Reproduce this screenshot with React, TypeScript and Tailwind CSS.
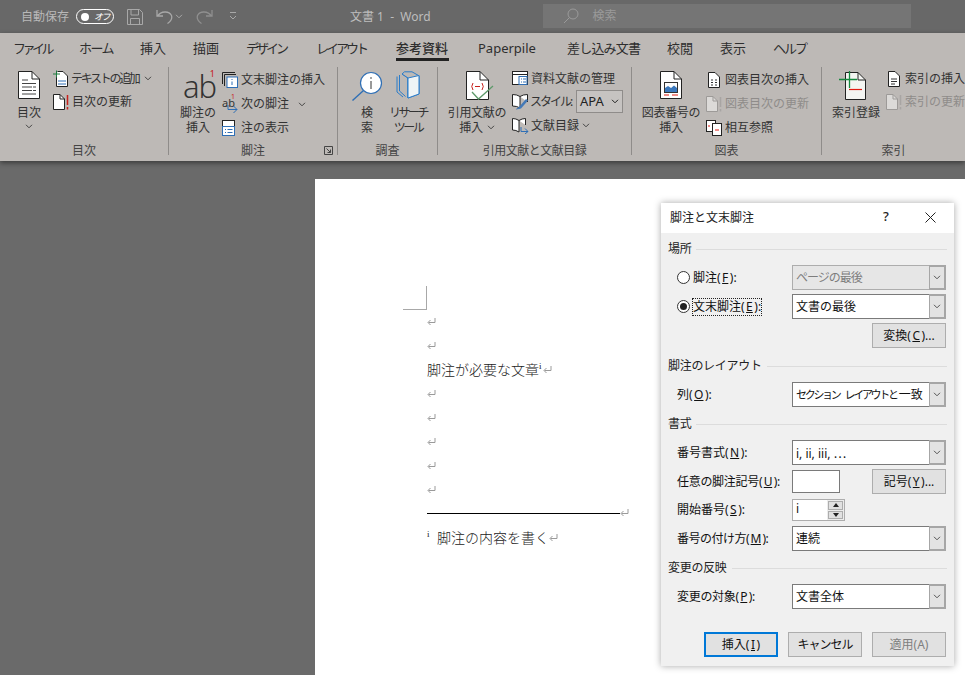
import type { ReactNode } from "react"

const tabs = [
  { label: "ファイル", ml: "ml-[13px]", cls: "tracking-[-3.500px]", w: "w-[38px]" },
  { label: "ホーム", ml: "ml-[28px]", cls: "tracking-[-1.500px]", w: "w-[34px]" },
  { label: "挿入", ml: "ml-[27px]", cls: "", w: "w-[26px]" },
  { label: "描画", ml: "ml-[27px]", cls: "", w: "w-[26px]" },
  { label: "デザイン", ml: "ml-[27px]", cls: "tracking-[-3px]", w: "w-[42px]" },
  { label: "レイアウト", ml: "ml-[28px]", cls: "tracking-[-3px]", w: "w-[50px]" },
  { label: "参考資料", ml: "ml-[30px]", cls: "font-medium border-b-[3px] border-[#222]", w: "w-[53px]" },
  { label: "Paperpile", ml: "ml-[29px]", cls: "", w: "w-[59px]" },
  { label: "差し込み文書", ml: "ml-[30px]", cls: "tracking-[-0.800px]", w: "w-[73px]" },
  { label: "校閲", ml: "ml-[27px]", cls: "", w: "w-[26px]" },
  { label: "表示", ml: "ml-[27px]", cls: "", w: "w-[26px]" },
  { label: "ヘルプ", ml: "ml-[27px]", cls: "tracking-[-2px]", w: "w-[32px]" },
]

function Chevron({ className = "" }: { className?: string }) {
  return (
    <svg viewBox="0 0 8 5" className={"w-2 h-[5px] " + className} fill="none" stroke="currentColor" strokeWidth="1">
      <path d="M1 .8l3 3 3-3" />
    </svg>
  )
}

function TocBigIcon() {
  return (
    <svg width="22" height="28" viewBox="0 0 22 28" fill="none">
      <path d="M.5 .5H14L21.500 8V27.500H.5Z" fill="#fff" stroke="#222" />
      <path d="M14 .5V8H21.500" stroke="#222" />
      <path d="M4 9h6M4 12.500h14M4 16h10M15 16h3M4 19.500h10M15 19.500h3M4 23h14" stroke="#444" />
    </svg>
  )
}

function AbIcon() {
  return (
    <div className="relative w-[30px] h-[30px] text-[#333] font-light text-[31px] leading-[30px] tracking-[-1px]">
      ab
      <span className="absolute right-[-1px] top-[-3px] text-[9px] leading-[12px] font-normal text-[#c8201c]">1</span>
    </div>
  )
}

function SearchIcon() {
  return (
    <svg width="32" height="30" viewBox="0 0 32 30" fill="none">
      <circle cx="20" cy="12" r="10.500" fill="#fff" stroke="#2f6fb5" strokeWidth="1.200" />
      <path d="M12.500 19.500L1.500 29.500" stroke="#2f6fb5" strokeWidth="1.400" />
      <path d="M20 10v8" stroke="#333" />
      <circle cx="20" cy="7" r=".8" fill="#333" />
    </svg>
  )
}

function BooksIcon() {
  return (
    <svg width="24" height="30" viewBox="0 0 24 30" fill="none" stroke="#2b7cc9">
      <path d="M1 5.500V21l6 5M3.500 4v16l6 5.500M6 3l6 4v20" />
      <path d="M8.500 .8L16 .8l7 4V23l-11 4V7L6 3Z" fill="#bdb9b6" />
      <path d="M12 7l11-2.500V23l-11 4Z" fill="#eef4f6" />
    </svg>
  )
}

function CiteIcon() {
  return (
    <svg className="ml-[6px]" width="28" height="30" viewBox="0 0 28 30" fill="none">
      <path d="M.5 .5H14L22.500 9V28.500H.5Z" fill="#fff" stroke="#222" />
      <path d="M14 .5V9H22.500" stroke="#222" />
      <path d="M7 12q-2.500 3.500 0 7M16 12q2.500 3.500 0 7M9 15.500h5" stroke="#c8201c" />
      <path d="M6 21l6.500 7L27 15" stroke="#5d9a6a" strokeWidth="1.300" fill="none" />
    </svg>
  )
}

function PictureIcon() {
  return (
    <svg width="22" height="28" viewBox="0 0 22 28" fill="none">
      <path d="M.5 .5H14L21.500 8V27.500H.5Z" fill="#fff" stroke="#222" />
      <path d="M14 .5V8H21.500" stroke="#222" />
      <rect x="4.500" y="11.500" width="13" height="10" fill="#fff" stroke="#333" />
      <path d="M5 21v-4l3-2 3 2 3-2.500 3 2.500v4Z" fill="#3b78bd" />
      <path d="M4 24h5M12 24h6" stroke="#e01a12" strokeWidth="1.200" />
    </svg>
  )
}

function IndexIcon() {
  return (
    <svg className="-ml-[6px]" width="28" height="30" viewBox="0 0 28 30" fill="none">
      <path d="M6.500 1.500H19L26.500 9V28.500H6.500Z" fill="#f4f5f2" stroke="#222" />
      <path d="M19 1.500V9H26.500" stroke="#222" />
      <path d="M10.500 0v17M0 8.500h18" stroke="#15883e" strokeWidth="1.300" />
      <path d="M10 18.500h13" stroke="#e01a12" strokeWidth="1.200" />
    </svg>
  )
}

function SmallIcon({ kind }: { kind: string }) {
  if (kind === "addText")
    return (
      <svg width="15" height="17" viewBox="0 0 15 17" fill="none">
        <path d="M4.500 1.500H10L14.500 6V16.500H3.500V6" fill="#fff" stroke="#222" />
        <path d="M5 11h8M5 14h8" stroke="#2f6fb5" />
        <path d="M0 4h7M3.500 .5v7" stroke="#1f7a3f" />
      </svg>
    )
  if (kind === "update")
    return (
      <svg width="17" height="16" viewBox="0 0 17 16" fill="none">
        <path d="M.5 .5H7L11.500 5V15.500H.5Z" fill="#fff" stroke="#222" />
        <path d="M7 .5V5H11.500" stroke="#222" />
        <path d="M14.500 1v10M14.500 13v2.500" stroke="#c8201c" strokeWidth="1.500" />
      </svg>
    )
  if (kind === "updateOff")
    return (
      <svg width="17" height="16" viewBox="0 0 17 16" fill="none">
        <path d="M.5 .5H7L11.500 5V15.500H.5Z" fill="#dcdad8" stroke="#9d9a98" />
        <path d="M7 .5V5H11.500" stroke="#9d9a98" />
        <path d="M14.500 1v10M14.500 13v2.500" stroke="#a8a5a3" strokeWidth="1.500" />
      </svg>
    )
  if (kind === "endnote")
    return (
      <svg width="16" height="16" viewBox="0 0 16 16" fill="none">
        <path d="M.5 12V.5H13" stroke="#222" />
        <path d="M2.500 14V2.500H14" stroke="#222" />
        <rect x="5" y="5" width="10.500" height="10.500" fill="#fff" stroke="#2f6fb5" />
        <path d="M10 7v1M10 9.500v3.500" stroke="#2f6fb5" />
      </svg>
    )
  if (kind === "next")
    return (
      <div className="relative w-[16px] h-[16px] text-[11px] leading-[14px] text-[#333]">
        ab
        <span className="absolute right-[3px] top-[-3px] text-[7px] leading-[8px] text-[#c8201c]">1</span>
        <svg className="absolute right-[0px] bottom-[-2px]" width="11" height="9" viewBox="0 0 11 9" fill="none" stroke="#2f6fb5">
          <path d="M1 0v4.500h9M6.500 1l3.500 3.500L6.500 8" />
        </svg>
      </div>
    )
  if (kind === "show")
    return (
      <svg width="15" height="16" viewBox="0 0 15 16" fill="none">
        <rect x=".5" y=".5" width="12" height="15" fill="#fff" stroke="#222" />
        <rect x=".5" y="6.500" width="12" height="9" fill="#fff" stroke="#2f6fb5" />
        <path d="M3 9.500h1M5.500 9.500h5M3 12.500h1M5.500 12.500h5" stroke="#2f6fb5" />
      </svg>
    )
  if (kind === "manage")
    return (
      <svg width="16" height="15" viewBox="0 0 16 15" fill="none">
        <rect x=".5" y=".5" width="15" height="13" fill="#fff" stroke="#222" />
        <path d="M.5 3.500h15" stroke="#222" />
        <rect x="7" y="5.500" width="8" height="8" fill="#fff" stroke="#2f6fb5" />
        <path d="M9 8h1M11 8h3M9 11h1M11 11h3" stroke="#2f6fb5" />
      </svg>
    )
  if (kind === "style")
    return (
      <svg width="17" height="16" viewBox="0 0 17 16" fill="none">
        <path d="M8 2.500Q5 .5.500.5V12Q5 12 8 14ZM8 2.500Q11 .5 15.500.5V8" fill="#fff" stroke="#222" />
        <path d="M4 15l3-2 7-8 2 1.500-7 8-5 1Z" fill="#4479b7" />
      </svg>
    )
  if (kind === "biblio")
    return (
      <svg width="17" height="16" viewBox="0 0 17 16" fill="none">
        <path d="M7 2.500Q4 .5.500.5V12Q4 12 7 14ZM7 2.500Q10 .5 13.500.5V7" fill="#fff" stroke="#222" />
        <path d="M9 9v4.500h7M13 10.500l3 3-3 2.500" stroke="#2f6fb5" />
      </svg>
    )
  if (kind === "figToc")
    return (
      <svg width="12" height="16" viewBox="0 0 12 16" fill="none">
        <path d="M.5 .5H7L11.500 5V15.500H.5Z" fill="#fff" stroke="#222" />
        <path d="M3 8h2M7 8h2M3 10.500h2M7 10.500h2M3 13h2M7 13h2" stroke="#333" />
      </svg>
    )
  if (kind === "cross")
    return (
      <svg width="16" height="16" viewBox="0 0 16 16" fill="none">
        <rect x=".5" y=".5" width="9" height="11" fill="#fff" stroke="#222" />
        <path d="M2 6h2" stroke="#e01a12" />
        <rect x="6.500" y="3.500" width="9" height="12" fill="#fff" stroke="#222" />
        <path d="M9 10h4" stroke="#e01a12" />
      </svg>
    )
  return (
    <svg width="12" height="16" viewBox="0 0 12 16" fill="none">
      <path d="M.5 .5H7L11.500 5V15.500H.5Z" fill="#fff" stroke="#222" />
      <path d="M3 8h6M3 10.500h6M3 13h4" stroke="#333" />
    </svg>
  )
}

function Group({ label, w, border = true, children, launcher, cls = "" }: { label: string; w: string; border?: boolean; children: ReactNode; launcher?: boolean; cls?: string }) {
  return (
    <div className={"relative shrink-0 h-[88px] " + w + (border ? " border-r border-[#8f8c8a]" : "")}>
      <div className="flex h-[76px]">{children}</div>
      <div className={"h-3 leading-[16px] text-center text-[12px] text-[#444] " + cls}>{label}</div>
      {launcher && (
        <svg className="absolute right-[4px] bottom-[0px]" width="9" height="9" viewBox="0 0 9 9" fill="none" stroke="#444">
          <path d="M.5 .5h8v8h-8ZM2.500 2.500l4 4M6.500 3.500v3h-3" />
        </svg>
      )}
    </div>
  )
}

function BigBtn({ icon, lines, chevron, inlineChevron, cls = "", text = "" }: { icon: ReactNode; lines: string[]; chevron?: boolean; inlineChevron?: boolean; cls?: string; text?: string }) {
  return (
    <div className={"flex flex-col items-center pt-1 shrink-0 " + cls}>
      <div className="h-[34px] flex justify-center">{icon}</div>
      {lines.map((l, i) => (
        <div key={l} className={"h-[15px] leading-[15px] text-[12px] whitespace-nowrap text-[#333] flex items-center " + text}>
          {l}
          {inlineChevron && i === lines.length - 1 && <Chevron className="ml-[4px] text-[#444]" />}
        </div>
      ))}
      {chevron && <Chevron className="mt-[4px] text-[#444]" />}
    </div>
  )
}

function SmallBtn({ kind, label, off, chevron, h = "h-6", iw = "w-[19px]", cls = "" }: { kind: string; label: string; off?: boolean; chevron?: string; h?: string; iw?: string; cls?: string }) {
  return (
    <div className={"flex items-center whitespace-nowrap text-[12px] " + h + (off ? " text-[#8f8c8a]" : " text-[#333]")}>
      <div className={"shrink-0 flex " + iw}>
        <SmallIcon kind={kind} />
      </div>
      <span className={cls}>{label}</span>
      {chevron && <Chevron className={chevron + " text-[#444]"} />}
    </div>
  )
}

function Select({ value, disabled, cls = "" }: { value: ReactNode; disabled?: boolean; cls?: string }) {
  return (
    <div className={"w-[154px] h-[25px] flex border " + (disabled ? "bg-[#e6e6e6] border-[#adadad] text-[#7d7d7d]" : "bg-white border-[#7a7a7a] text-[#111]")}>
      <div className={"flex-1 pl-[3px] leading-[23px] whitespace-nowrap overflow-hidden " + cls}>{value}</div>
      <div className="-my-px -mr-px w-[17px] h-[25px] shrink-0 flex items-center justify-center border-2 border-l border-[#a6a6a6] bg-[#e3e3e3] text-[#555]">
        <Chevron />
      </div>
    </div>
  )
}

function Btn({ children, cls = "", off, focus }: { children: ReactNode; cls?: string; off?: boolean; focus?: boolean }) {
  return (
    <div className={"w-[74px] h-[25px] flex items-center justify-center bg-[#e1e1e1] whitespace-nowrap " + (focus ? "border-2 border-[#0078d7] " : "border border-[#adadad] ") + (off ? "text-[#7f7f7f] " : "text-[#111] ") + cls}>
      {children}
    </div>
  )
}

function Section({ label, cls = "" }: { label: string; cls?: string }) {
  return (
    <div className={"flex items-center h-4 pl-[7px] pr-[7px] " + cls}>
      <span className="whitespace-nowrap text-[#222] tracking-[-0.300px]">{label}</span>
      <div className="flex-1 ml-[5px] border-t border-[#dcdcdc]" />
    </div>
  )
}

function Row({ children, cls = "" }: { children: ReactNode; cls?: string }) {
  return <div className={"flex items-center pl-4 pr-2 " + cls}>{children}</div>
}

function Radio({ on }: { on?: boolean }) {
  return (
    <div className="w-[13px] h-[13px] mr-[3px] rounded-full border border-[#333] bg-white flex items-center justify-center shrink-0">
      {on && <div className="w-[7px] h-[7px] rounded-full bg-[#222]" />}
    </div>
  )
}

function Mark({ cls = "" }: { cls?: string }) {
  return (
    <svg className={"shrink-0 " + cls} width="9" height="9" viewBox="0 0 9 9" fill="none" stroke="#9a9a9a">
      <path d="M8 1v4.500H1.500M3.500 3L1 5.500 3.500 8" />
    </svg>
  )
}

function EmptyLine() {
  return (
    <div className="h-6 flex items-center">
      <Mark />
    </div>
  )
}

function Dialog() {
  return (
    <div className="absolute left-[661px] top-[42px] w-[293px] h-[463px] bg-[#f0f0f0] shadow-[0_0_7px_rgba(0,0,0,0.35)] text-[12px] text-[#111] [&_u]:mx-[1.500px]">
      <div className="h-[30px] bg-white flex items-center pl-[9px] text-[#222] relative">
        <span>脚注と文末脚注</span>
        <span className="absolute left-[222px] top-[5px] text-[13px] leading-[16px] font-medium">?</span>
        <svg className="absolute left-[264px] top-[9px]" width="11" height="11" viewBox="0 0 11 11" fill="none" stroke="#222">
          <path d="M.5 .5l10 10M10.500 .5l-10 10" />
        </svg>
      </div>
      <Section label="場所" cls="mt-2" />
      <Row cls="mt-2">
        <div className="w-[115px] flex items-center">
          <Radio />
          <span>
            脚注(<u>F</u>):
          </span>
        </div>
        <Select value="ページの最後" disabled cls="tracking-[-1px]" />
      </Row>
      <Row cls="mt-1">
        <div className="w-[115px] flex items-center">
          <Radio on />
          <span className="border border-dotted border-[#222] leading-[16px] -ml-px">
            文末脚注(<u>E</u>):
          </span>
        </div>
        <Select value="文書の最後" />
      </Row>
      <div className="mt-1 flex justify-end pr-2">
        <Btn>
          変換(<u>C</u>)...
        </Btn>
      </div>
      <Section label="脚注のレイアウト" cls="mt-[10px]" />
      <Row cls="mt-2">
        <div className="w-[115px]">
          列(<u>O</u>):
        </div>
        <Select
          value={
            <>
              <span className="text-[11px] tracking-[-2.300px]">セクション</span>
              <span className="ml-[5px] text-[11px] tracking-[-2.300px]">レイアウトと</span>
              <span className="ml-[2px]">一致</span>
            </>
          }
        />
      </Row>
      <Section label="書式" cls="mt-[9px]" />
      <Row cls="mt-2">
        <div className="w-[115px]">
          番号書式(<u>N</u>):
        </div>
        <Select
          value={
            <>
              i, ii, iii, <span className="font-['Noto_Sans_CJK_JP']">⋯</span>
            </>
          }
        />
      </Row>
      <Row cls="mt-1 h-[25px]">
        <div className="w-[115px] whitespace-nowrap tracking-[-0.300px]">
          任意の脚注記号(<u>U</u>):
        </div>
        <div className="w-12 h-[23px] bg-white border border-[#7a7a7a]" />
        <Btn cls="ml-8">
          記号(<u>Y</u>)...
        </Btn>
      </Row>
      <Row cls="mt-[5px]">
        <div className="w-[115px]">
          開始番号(<u>S</u>):
        </div>
        <div className="w-[53px] h-[22px] bg-white border border-[#adadad] flex">
          <div className="flex-1 pl-[3px] leading-[18px]">i</div>
          <div className="w-[17px] flex flex-col bg-[#ececec] p-px gap-px text-[#222]">
            <div className="flex-1 bg-[#e1e1e1] border border-[#adadad] flex items-center justify-center">
              <div className="w-0 h-0 border-x-[3px] border-x-transparent border-b-[4px] border-b-[#222]" />
            </div>
            <div className="flex-1 bg-[#e1e1e1] border border-[#adadad] flex items-center justify-center">
              <div className="w-0 h-0 border-x-[3px] border-x-transparent border-t-[4px] border-t-[#222]" />
            </div>
          </div>
        </div>
      </Row>
      <Row cls="mt-[5px]">
        <div className="w-[115px] whitespace-nowrap tracking-[-0.500px]">
          番号の付け方(<u>M</u>):
        </div>
        <Select value="連続" />
      </Row>
      <Section label="変更の反映" cls="mt-[9px]" />
      <Row cls="mt-2">
        <div className="w-[115px] whitespace-nowrap tracking-[-0.300px]">
          変更の対象(<u>P</u>):
        </div>
        <Select value="文書全体" />
      </Row>
      <div className="mt-[23px] flex justify-end gap-[10px] pr-2">
        <Btn focus>
          挿入(<u>I</u>)
        </Btn>
        <Btn cls="tracking-[-1px]">キャンセル</Btn>
        <Btn off>適用(A)</Btn>
      </div>
    </div>
  )
}

export default function App() {
  return (
    <div className="w-[965px] h-[675px] overflow-hidden flex flex-col bg-[#6a6a6a] font-['Noto_Sans','Noto_Sans_CJK_JP',sans-serif]">
      {/* title bar */}
      <div className="h-[33px] shrink-0 flex items-center bg-[#686868] text-[12px] text-[#b9b9b9]">
        <span className="ml-[21px] w-[48px] whitespace-nowrap">自動保存</span>
        <div className="ml-[7px] w-[38px] h-[15px] rounded-full border border-white flex items-center pl-[4px] text-white">
          <div className="w-[8px] h-[8px] rounded-full bg-white" />
          <span className="ml-[5px] text-[9px] leading-[13px] italic tracking-[-1.500px]">オフ</span>
        </div>
        <svg className="ml-[13px]" width="16" height="16" viewBox="0 0 16 16" fill="none" stroke="#a8a8a8">
          <path d="M.5 .5H12.500L15.500 3.500V15.500H.5ZM4 .5V6H11.500V.5M3.500 15.500V9.500H12.500V15.500" />
        </svg>
        <svg className="ml-[13px]" width="17" height="15" viewBox="0 0 17 15" fill="none" stroke="#a8a8a8" strokeWidth="1.300">
          <path d="M1 1v6h6M1.500 7C5 2 13 1.500 15.500 6.500c1 3-1 6.500-4 8" />
        </svg>
        <Chevron className="ml-[2px] text-[#a8a8a8]" />
        <svg className="ml-[13px]" width="17" height="15" viewBox="0 0 17 15" fill="none" stroke="#8f8f8f" strokeWidth="1.300">
          <path d="M16 1v6h-6M15.500 7C12 2 4 1.500 1.500 6.500c-1 3 1 6.500 4 8" />
        </svg>
        <svg className="ml-[16px]" width="8" height="9" viewBox="0 0 8 9" fill="none" stroke="#a8a8a8">
          <path d="M1 .5h6M1 4l3 3 3-3" />
        </svg>
        <span className="ml-[113px] text-[12px] text-[#bdbdbd] whitespace-nowrap">文書 1&nbsp; -&nbsp; Word</span>
        <div className="ml-[112px] w-[368px] h-6 bg-[#757575] flex items-center pl-5 text-[#9a9a9a] mb-[2px]">
          <svg width="16" height="16" viewBox="0 0 16 16" fill="none" stroke="#9a9a9a">
            <circle cx="10" cy="6" r="5" />
            <path d="M6.500 9.500L1 15" />
          </svg>
          <span className="ml-[14px]">検索</span>
        </div>
      </div>

      {/* ribbon */}
      <div className="h-[128px] shrink-0 bg-[#bdb9b6] shadow-[0_2px_5px_rgba(0,0,0,0.45)] z-10 relative">
        <div className="h-[33px] flex items-start">
          {tabs.map((t) => (
            <div key={t.label} className={"shrink-0 pt-[7px] " + t.w + " " + t.ml}>
              <div className={"h-[21px] leading-[17px] text-[13px] text-[#2e2e2e] whitespace-nowrap " + t.cls}>{t.label}</div>
            </div>
          ))}
        </div>
        <div className="flex mt-px">
          <Group label="目次" w="w-[169px]">
            <BigBtn icon={<TocBigIcon />} lines={["目次"]} chevron cls="ml-[17px] w-[24px]" />
            <div className="ml-[12px]">
              <SmallBtn kind="addText" label="テキストの追加" h="h-[23px]" iw="w-[18px]" cls="tracking-[-2.300px]" chevron="ml-[5px]" />
              <SmallBtn kind="update" label="目次の更新" h="h-[23px]" iw="w-[19px]" />
            </div>
          </Group>
          <Group label="脚注" w="w-[169px]" launcher>
            <BigBtn icon={<AbIcon />} lines={["脚注の", "挿入"]} cls="ml-[11px] w-[36px]" />
            <div className="ml-[6px] pt-px">
              <SmallBtn kind="endnote" label="文末脚注の挿入" />
              <SmallBtn kind="next" label="次の脚注" chevron="ml-[9px]" />
              <SmallBtn kind="show" label="注の表示" />
            </div>
          </Group>
          <Group label="調査" w="w-[100px]">
            <BigBtn icon={<SearchIcon />} lines={["検", "索"]} cls="ml-[13px] w-[32px]" />
            <BigBtn icon={<BooksIcon />} lines={["リサーチ", "ツール"]} text="tracking-[-2.500px]" cls="ml-[6px] w-[38px]" />
          </Group>
          <Group label="引用文献と文献目録" w="w-[194px]" cls="tracking-[-0.500px]">
            <BigBtn icon={<CiteIcon />} lines={["引用文献の", "挿入"]} inlineChevron text="tracking-[-0.300px]" cls="ml-[9px] w-[60px]" />
            <div className="ml-[5px]">
              <SmallBtn kind="manage" label="資料文献の管理" h="h-[23px]" />
              <div className="flex items-center h-[23px]">
                <SmallBtn kind="style" label="スタイル:" h="h-[23px]" iw="w-[18px]" cls="tracking-[-2px] w-[44px]" />
                <div className="ml-[2px] w-[47px] h-[23px] border border-[#8f8c8a] bg-[#c6c3c1] flex items-center justify-between px-[3px] text-[13px] text-[#222]">
                  APA
                  <Chevron />
                </div>
              </div>
              <SmallBtn kind="biblio" label="文献目録" h="h-[25px]" chevron="ml-[3px]" />
            </div>
          </Group>
          <Group label="図表" w="w-[190px]">
            <BigBtn icon={<PictureIcon />} lines={["図表番号の", "挿入"]} text="tracking-[-0.300px]" cls="ml-[10px] w-[58px]" />
            <div className="ml-[6px] pt-px">
              <SmallBtn kind="figToc" label="図表目次の挿入" iw="w-[19px] pl-[2px]" />
              <SmallBtn kind="updateOff" label="図表目次の更新" off />
              <SmallBtn kind="cross" label="相互参照" />
            </div>
          </Group>
          <Group label="索引" w="w-[143px]" border={false}>
            <BigBtn icon={<IndexIcon />} lines={["索引登録"]} cls="ml-[10px] w-[48px]" />
            <div className="ml-[8px]">
              <SmallBtn kind="figIndex" label="索引の挿入" h="h-[23px]" iw="w-[17px]" />
              <SmallBtn kind="updateOff" label="索引の更新" off h="h-[23px]" iw="w-[19px] -ml-[2px]" />
            </div>
          </Group>
        </div>
      </div>

      {/* document canvas */}
      <div className="relative flex-1 pl-[315px] pt-[18px] overflow-hidden">
        <div className="h-full bg-white pl-[112px] pt-[107px] text-[14px] text-[#222] font-light">
          <div className="w-6 h-6 -ml-6 border-r border-b border-[#a8a8a8]" />
          <div className="-mt-px">
            <EmptyLine />
            <EmptyLine />
            <div className="h-6 flex items-center whitespace-nowrap">
              脚注が必要な文章
              <span className="font-['Liberation_Serif'] font-normal text-[9px] self-start leading-[18px]">i</span>
              <Mark cls="ml-[1px]" />
            </div>
            <EmptyLine />
            <EmptyLine />
            <EmptyLine />
            <EmptyLine />
            <EmptyLine />
          </div>
          <div className="h-[24px] flex items-center">
            <div className="w-[193px] border-t border-black" />
            <Mark cls="-mt-[1px]" />
          </div>
          <div className="h-[24px] flex items-center whitespace-nowrap">
            <span className="w-[10px] font-['Liberation_Serif'] font-normal text-[9px] self-start leading-[18px]">i</span>
            脚注の内容を書く
            <Mark />
          </div>
        </div>
        <Dialog />
      </div>
    </div>
  )
}
